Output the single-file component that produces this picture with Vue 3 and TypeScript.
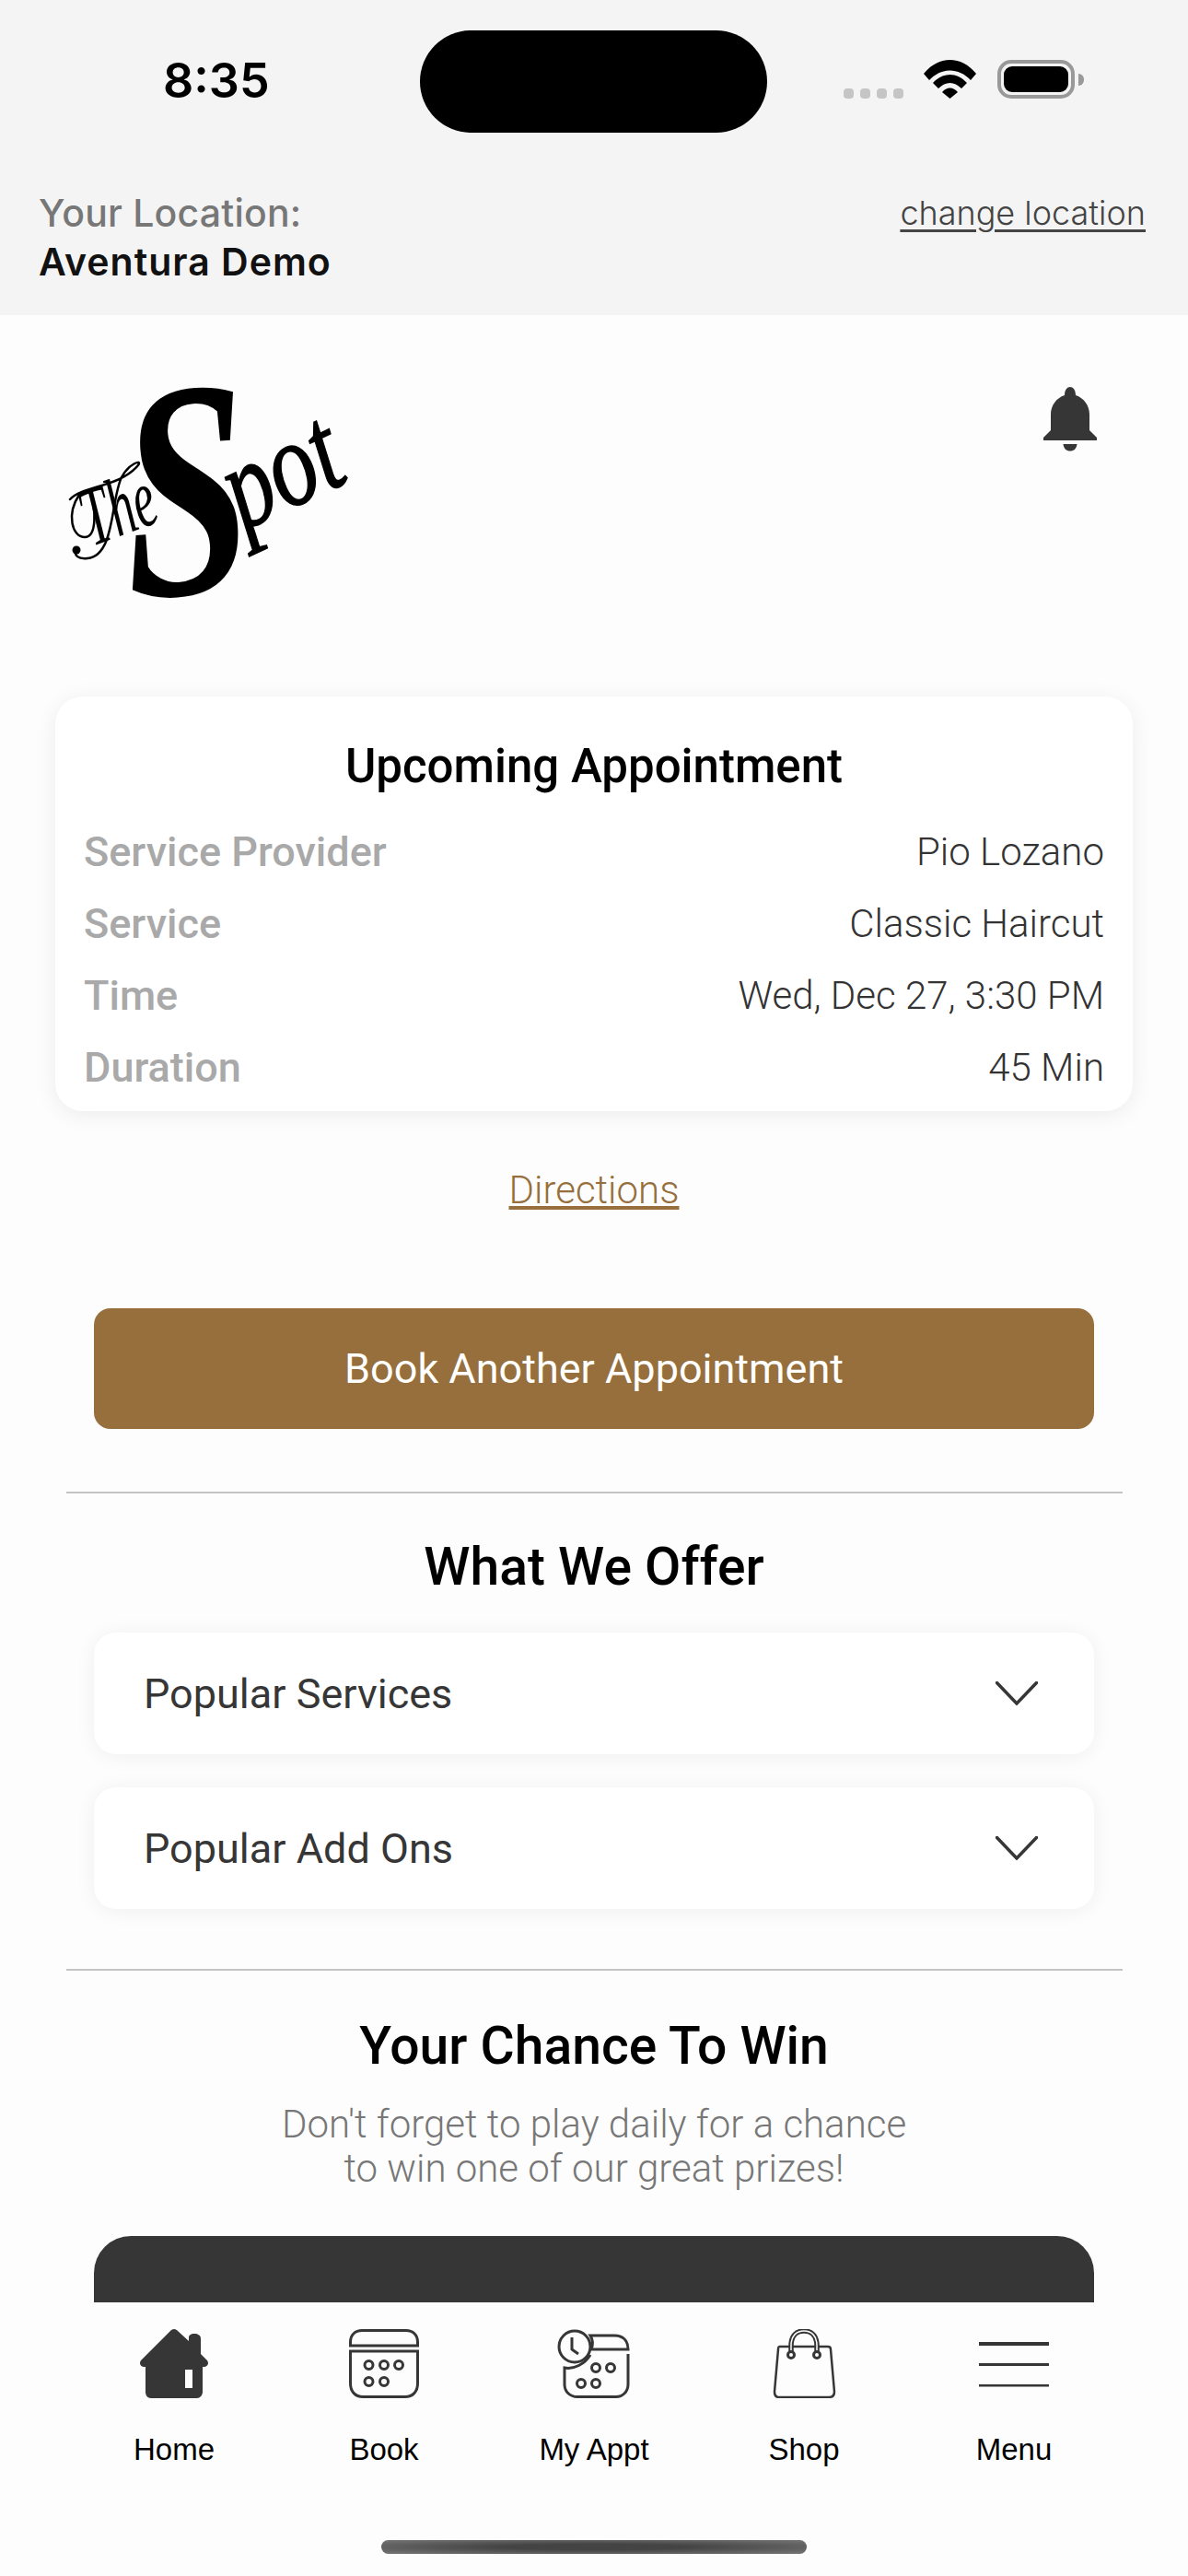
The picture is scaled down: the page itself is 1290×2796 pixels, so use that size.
<script setup lang="ts">
const details = [
  { label: "Service Provider", value: "Pio Lozano" },
  { label: "Service", value: "Classic Haircut" },
  { label: "Time", value: "Wed, Dec 27, 3:30 PM" },
  { label: "Duration", value: "45 Min" },
];

const offers = ["Popular Services", "Popular Add Ons"];

const tabs = ["Home", "Book", "My Appt", "Shop", "Menu"];
</script>

<template>
  <div class="phone">
    <header class="top">
      <div class="status">
        <span class="clock">8:35</span>
        <div class="island"></div>
        <div class="status-icons">
          <div class="signal"><i></i><i></i><i></i><i></i></div>
          <svg class="wifi" viewBox="0 0 57 42" width="57" height="42">
            <path d="M0 15 C16 -5 41 -5 57 15 L51 22 C38 8 19 8 6 22 Z" fill="#000" />
            <path d="M10 25 C21 13 36 13 47 25 L41 31 C33 23 24 23 16 31 Z" fill="#000" />
            <path d="M20 35 C25 29 32 29 37 35 L28.500 42 Z" fill="#000" />
          </svg>
          <div class="battery"><b></b></div>
        </div>
      </div>
      <div class="location">
        <div>
          <div class="loc-label">Your Location:</div>
          <div class="loc-name">Aventura Demo</div>
        </div>
        <a class="loc-change">change location</a>
      </div>
    </header>

    <main class="content">
      <div class="brand">
        <svg class="logo" viewBox="0 0 320 240" width="320" height="240">
          <text class="logo-the" transform="translate(30 180) rotate(-20) scale(0.9 1.5)">The</text>
          <text class="logo-pot" transform="translate(194 163) rotate(-25) scale(1.15 1.5)">pot</text>
          <text class="logo-s" transform="translate(70 236) rotate(-4) scale(0.78 1.05)">S</text>
          <g fill="none" stroke="#000" stroke-width="2.500" stroke-linecap="round">
            <path d="M6 129 C20 114 60 116 80 92 C85 85 70 90 62 105 C50 130 55 190 25 193 C15 194 10 190 13 184" />
            <path d="M16 124 C2 145 8 170 22 170 C35 170 35 140 27 120" />
          </g>
          <circle cx="13" cy="184" r="4.500" />
        </svg>
        <svg class="bell" viewBox="0 0 60 70" width="60" height="70">
          <path
            d="M24 9 C24 3 27 0 30 0 C33 0 36 3 36 9 C45 12 51 20 51 30 L51 47 L59 55 L59 58 L1 58 L1 55 L9 47 L9 30 C9 20 15 12 24 9 Z"
            fill="#363636"
          />
          <path d="M22.500 62 L37.500 62 C37 67 34 69.500 30 69.500 C26 69.500 23 67 22.500 62 Z" fill="#363636" />
        </svg>
      </div>

      <section class="appt-card">
        <h2 class="appt-title">Upcoming Appointment</h2>
        <div v-for="row in details" :key="row.label" class="appt-row">
          <span class="appt-label">{{ row.label }}</span>
          <span class="appt-value">{{ row.value }}</span>
        </div>
      </section>

      <a class="directions">Directions</a>

      <button class="book-btn">Book Another Appointment</button>

      <hr class="rule rule-first" />

      <h2 class="heading offer-heading">What We Offer</h2>
      <div class="offers">
        <div v-for="offer in offers" :key="offer" class="offer">
          <span>{{ offer }}</span>
          <svg viewBox="0 0 46 26" width="46" height="26">
            <path d="M1.500 1.500 L23 24 L44.500 1.500" fill="none" stroke="#363636" stroke-width="3.500" stroke-linecap="round" />
          </svg>
        </div>
      </div>

      <hr class="rule rule-second" />

      <h2 class="heading win-heading">Your Chance To Win</h2>
      <p class="win-text">Don't forget to play daily for a chance<br />to win one of our great prizes!</p>
      <div class="win-card"></div>
    </main>

    <nav class="tabbar">
      <div v-for="(tab, i) in tabs" :key="tab" class="tab">
        <svg class="tab-icon" viewBox="0 0 100 75" width="100" height="75">
          <!-- home -->
          <g v-if="i === 0">
            <path
              d="M50 0 C52 0 53 1 54 2 L66 13 L66 9 C66 7 68 5 72 5 C76 5 79 7 79 10 L79 27 L86 34 C88 37 87 40 83 41 L81 41 L81 68 C81 72 78 75 75 75 L25 75 C21 75 19 72 19 68 L19 41 L17 41 C13 40 12 37 14 34 L46 2 C47 1 48 0 50 0 Z"
              fill="#363636"
            />
            <rect x="62" y="44" width="8" height="20" fill="#fdfdfd" />
          </g>
          <!-- book -->
          <g v-else-if="i === 1" fill="none" stroke="#363636" stroke-width="3">
            <path d="M13.500 18 L13.500 14 C13.500 6 19 1.500 26 1.500 L74 1.500 C81 1.500 86.500 6 86.500 14 L86.500 18 Z" />
            <path d="M13.500 24 L86.500 24 L86.500 59 C86.500 68 81 73.500 73 73.500 L27 73.500 C19 73.500 13.500 68 13.500 59 Z" />
            <circle cx="33.500" cy="39" r="4.500" />
            <circle cx="50" cy="39" r="4.500" />
            <circle cx="66" cy="39" r="4.500" />
            <circle cx="33.500" cy="57" r="4.500" />
            <circle cx="50" cy="57" r="4.500" />
          </g>
          <!-- my appt -->
          <g v-else-if="i === 2" fill="none" stroke="#363636" stroke-width="3">
            <circle cx="29" cy="19" r="17" />
            <path d="M26 9 L26 22 L33 27" stroke-linejoin="round" />
            <path d="M46 7 L72 7 C81 7 87 12 87 22 L47 22 C49 17 49 12 46 7 Z" />
            <path d="M87 27 L87 60 C87 68 81 73.500 74 73.500 L32 73.500 C24 73.500 18 68 18 60 L18 42 C28 44 40 38 46 28" />
            <circle cx="52" cy="42" r="4.500" />
            <circle cx="68" cy="42" r="4.500" />
            <circle cx="36" cy="59" r="4.500" />
            <circle cx="52" cy="59" r="4.500" />
          </g>
          <!-- shop -->
          <g v-else-if="i === 3" fill="none" stroke="#363636">
            <path
              d="M24 19 L76 19 C78 19 79 20 79 22 L83 68 C83 72 81 74 77 74 L23 74 C20 74 18 72 18 68 L22 22 C22 20 22 19 24 19 Z"
              stroke-width="2.500"
            />
            <path d="M36 26 L36 18 C36 7 42 2 50 2 C58 2 64 7 64 18 L64 26" stroke-width="5.500" />
            <path d="M36 26 L36 18 C36 7 42 2 50 2 C58 2 64 7 64 18 L64 26" stroke="#fdfdfd" stroke-width="1.500" />
            <circle cx="36" cy="28" r="3.500" stroke-width="3" />
            <circle cx="64" cy="28" r="3.500" stroke-width="3" />
          </g>
          <!-- menu -->
          <g v-else fill="#363636">
            <rect x="12" y="14" width="76" height="4" />
            <rect x="12" y="37" width="76" height="3" />
            <rect x="12" y="60" width="76" height="2.500" />
          </g>
        </svg>
        <span class="tab-label">{{ tab }}</span>
      </div>
      <div class="home-bar"></div>
    </nav>
  </div>
</template>

<style>
html,
body {
  margin: 0;
  background: #fdfdfd;
}
</style>

<style scoped>
.phone {
  width: 1290px;
  height: 2796px;
  display: flex;
  flex-direction: column;
  overflow: hidden;
  background: #fdfdfd;
  font-family: Roboto, sans-serif;
}

/* === Top === */
.top {
  height: 342px;
  flex: none;
  background: #f4f4f4;
  box-sizing: border-box;
}

.status {
  height: 177px;
  box-sizing: border-box;
  padding-top: 33px;
  display: flex;
}

.clock {
  width: 456px;
  box-sizing: border-box;
  padding-left: 177px;
  padding-top: 22px;
  font: 600 52px/66px Inter, sans-serif;
  color: #000;
}

.island {
  width: 377px;
  height: 111px;
  border-radius: 56px;
  background: #000;
}

.status-icons {
  display: flex;
  padding: 32px 0 0 83px;
  height: 42px;
  align-items: flex-end;
}

.signal {
  display: flex;
  gap: 7px;
  margin-right: 22px;
}

.signal i {
  width: 11px;
  height: 11px;
  border-radius: 4px;
  background: #c5c5c5;
}

.wifi {
  margin-right: 23px;
}

.battery {
  width: 84px;
  height: 42px;
  box-sizing: border-box;
  border: 4px solid #999;
  border-radius: 15px;
  padding: 3px;
  position: relative;
}

.battery b {
  display: block;
  height: 100%;
  border-radius: 9px;
  background: #000;
}

.battery::after {
  content: "";
  position: absolute;
  left: 84px;
  top: 11px;
  width: 6px;
  height: 13px;
  border-radius: 0 6px 6px 0;
  background: #999;
}

.location {
  display: flex;
  justify-content: space-between;
  padding: 29px 46px 0 42px;
}

.loc-label {
  font: 500 41px/50px Inter, sans-serif;
  letter-spacing: 0.2px;
  color: #777;
}

.loc-name {
  font: 600 41px/57px Inter, sans-serif;
  letter-spacing: 1px;
  color: #111;
}

.loc-change {
  font: 300 36px/50px Inter, sans-serif;
  color: #444;
  text-decoration: underline;
  text-underline-offset: 5px;
}

/* === Content === */
.content {
  flex: 1;
  min-height: 0;
  overflow: hidden;
  display: flex;
  flex-direction: column;
  align-items: center;
}

.brand {
  align-self: stretch;
  height: 414px;
  flex: none;
  display: flex;
  justify-content: space-between;
  padding: 71px 98px 0 70px;
  box-sizing: border-box;
}

.logo {
  overflow: visible;
  color: #000;
}

.logo-s {
  font: italic 700 320px "Liberation Serif", serif;
}

.logo-the {
  font: italic 400 60px "Liberation Serif", serif;
}

.logo-pot {
  font: italic 400 88px "Liberation Serif", serif;
  stroke: #000;
  stroke-width: 1px;
}

.bell {
  margin-top: 7px;
}

.appt-card {
  width: 1170px;
  height: 450px;
  flex: none;
  box-sizing: border-box;
  padding: 0 31px;
  background: #fff;
  border-radius: 30px;
  box-shadow: 0 4px 24px rgba(0, 0, 0, 0.07);
}

.appt-title {
  margin: 0;
  padding-top: 43px;
  height: 129px;
  box-sizing: border-box;
  font-size: 51px;
  line-height: 66px;
  font-weight: 500;
  text-align: center;
  color: #000;
}

.appt-row {
  height: 78px;
  display: flex;
  align-items: center;
  justify-content: space-between;
  font-size: 45px;
}

.appt-label {
  font-weight: 500;
  color: #a9a9a9;
}

.appt-value {
  font-size: 42px;
  font-weight: 300;
  color: #333;
}

.directions {
  margin-top: 58px;
  height: 56px;
  flex: none;
  font-size: 42px;
  line-height: 56px;
  font-weight: 300;
  color: #966f3c;
  text-decoration: underline;
}

.book-btn {
  margin-top: 100px;
  width: 1086px;
  height: 131px;
  flex: none;
  border: none;
  border-radius: 18px;
  background: #966f3c;
  color: #fff;
  font-family: Roboto, sans-serif;
  font-size: 45px;
}

.rule {
  width: 1147px;
  flex: none;
  box-sizing: border-box;
  height: 2px;
  margin: 0;
  border: none;
  background: #c4c4c4;
}

.rule-first {
  margin-top: 68px;
}

.rule-second {
  margin-top: 65px;
}

.heading {
  margin: 0;
  flex: none;
  height: 70px;
  font-size: 57px;
  line-height: 70px;
  font-weight: 500;
  color: #000;
}

.offer-heading {
  margin-top: 45px;
}

.win-heading {
  margin-top: 47px;
}

.offers {
  margin-top: 36px;
  flex: none;
  display: flex;
  flex-direction: column;
  gap: 36px;
}

.offer {
  width: 1086px;
  height: 132px;
  box-sizing: border-box;
  padding: 0 61px 0 54px;
  display: flex;
  align-items: center;
  justify-content: space-between;
  background: #fff;
  border-radius: 24px;
  box-shadow: 0 2px 22px rgba(0, 0, 0, 0.06);
  font-size: 45px;
  color: #363636;
}

.win-text {
  margin: 26px 0 0;
  flex: none;
  font-size: 42px;
  line-height: 48px;
  font-weight: 300;
  text-align: center;
  color: #777;
}

.win-card {
  margin-top: 49px;
  width: 1086px;
  height: 200px;
  flex: none;
  border-radius: 40px 40px 0 0;
  background: #363636;
}

/* === Tab bar === */
.tabbar {
  height: 297px;
  flex: none;
  position: relative;
  box-sizing: border-box;
  padding: 29px 75px 0;
  display: grid;
  grid-template-columns: repeat(5, 228px);
  align-items: start;
  background: #fdfdfd;
}

.tab {
  display: flex;
  flex-direction: column;
  align-items: center;
}

.tab-icon {
  display: block;
}

.tab-label {
  margin-top: 34px;
  font: 400 33px/44px "Liberation Sans", sans-serif;
  color: #000;
}

.home-bar {
  position: absolute;
  left: 414px;
  top: 258px;
  width: 462px;
  height: 15px;
  border-radius: 8px;
  background: radial-gradient(ellipse at center, #444 30%, #777 100%);
}
</style>
